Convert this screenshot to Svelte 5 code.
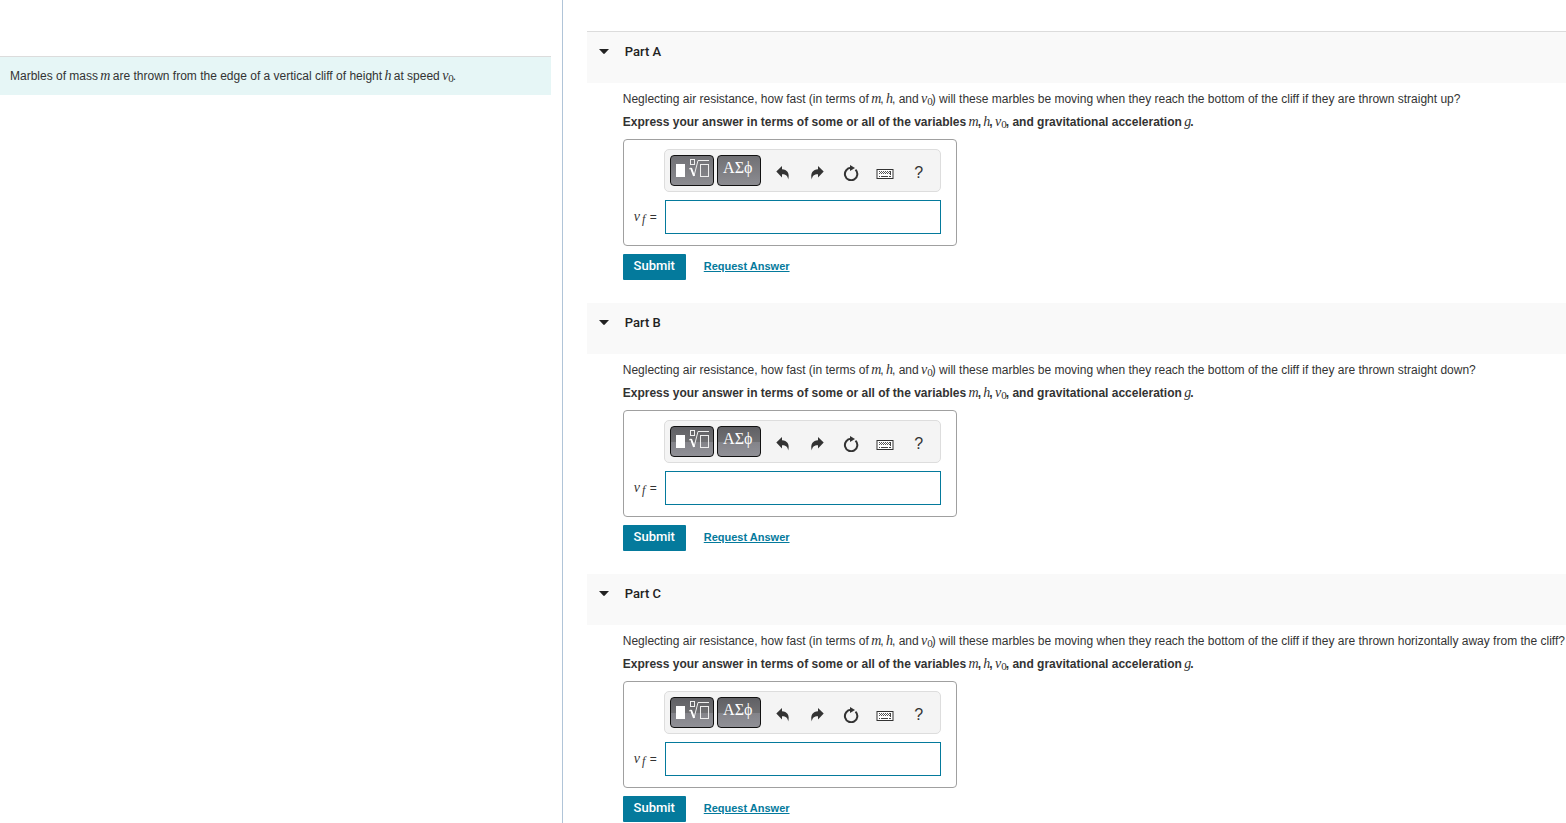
<script>
  let parts = $state([
    { id: 'A', ending: 'straight up', answer: '', open: true },
    { id: 'B', ending: 'straight down', answer: '', open: true },
    { id: 'C', ending: 'horizontally away from the cliff', answer: '', open: true }
  ]);

  const toggle = (part) => {
    part.open = !part.open;
  };

  const reset = (part) => {
    part.answer = '';
  };
</script>

{#snippet speed()}<i class="math">v<sub>0</sub></i>{/snippet}

<main>
  <aside>
    <p class="intro">
      Marbles of mass <i class="math">m</i> are thrown from the edge of a vertical cliff of height <i class="math">h</i> at speed {@render speed()}.
    </p>
  </aside>

  <div class="parts">
    {#each parts as part (part.id)}
      <section>
        <header>
          <button class="toggle" aria-expanded={part.open} onclick={() => toggle(part)}>
            <svg class="caret" class:closed={!part.open} viewBox="0 0 10 6" width="10" height="6"><path d="M0 0h10L5.8 4.6Q5 5.4 4.2 4.6z" /></svg>
            Part {part.id}
          </button>
        </header>
        {#if part.open}
          <div class="content">
            <p>Neglecting air resistance, how fast (in terms of <i class="math">m</i>, <i class="math">h</i>, and {@render speed()}) will these marbles be moving when they reach the bottom of the cliff if they are thrown {part.ending}?</p>
            <p class="instructions">Express your answer in terms of some or all of the variables <i class="math">m</i>, <i class="math">h</i>, {@render speed()}, and gravitational acceleration <i class="math">g</i>.</p>

            <div class="answer">
              <div class="toolbar">
                <button class="palette" class:flat={part.id === 'A'} aria-label="Templates">
                  <svg viewBox="0 0 34 22" width="34" height="22">
                    <rect x="1" y="6" width="9" height="13" fill="#fff" />
                    <g fill="none" stroke="#eee">
                      <rect x="15.5" y="1.5" width="4" height="5" />
                      <path d="M14 11l2-1 3 8 4-15.500H34" />
                      <rect x="25.500" y="6.500" width="8" height="12" />
                    </g>
                    <path d="M16 10l3 8" stroke="#fff" stroke-width="2" />
                  </svg>
                </button>
                <button class="palette greek" class:flat={part.id === 'A'} aria-label="Symbols">ΑΣϕ</button>
                <div class="icons">
                  <button aria-label="undo">
                    <svg viewBox="0 0 14 14" width="14" height="14"><path d="M6 0v3.200c5 .2 8 3.800 6.200 10.300C11.800 9.800 10 8.300 6 8.200v3.200L.3 5.600z" /></svg>
                  </button>
                  <button aria-label="redo">
                    <svg viewBox="0 0 14 14" width="14" height="14"><path d="M8 0v3.200C3 3.400 0 7 1.800 13.500 2.200 9.800 4 8.300 8 8.200v3.200l5.700-5.800z" /></svg>
                  </button>
                  <button aria-label="reset" onclick={() => reset(part)}>
                    <svg viewBox="0 0 16 16" width="16" height="16">
                      <path d="M12.500 4.600A6.200 6.200 0 1 1 8 2.800" fill="none" stroke="#333" stroke-width="2" />
                      <path d="M7 0l5 3-5 3z" />
                    </svg>
                  </button>
                  <button aria-label="keyboard shortcuts">
                    <svg viewBox="0 0 18 14" width="18" height="14">
                      <rect x="1" y="3.500" width="16" height="9" fill="#fff" stroke="#333" />
                      <path d="M3 5.500h12M4 6.500h11M3 7.500h12" stroke="#555" stroke-dasharray="1 1" />
                      <path d="M3 10.500h1M5 10.500h7M13 10.500h2M14.500 5v4" stroke="#444" />
                    </svg>
                  </button>
                  <button class="help" aria-label="help">?</button>
                </div>
              </div>
              <label for="answer-{part.id}"><i class="math">v<sub class="f">f</sub></i>=</label>
              <input id="answer-{part.id}" type="text" autocomplete="off" bind:value={part.answer} />
            </div>

            <div class="actions">
              <button class="submit">Submit</button>
              <a href="#request-{part.id}">Request Answer</a>
            </div>
          </div>
        {/if}
      </section>
    {/each}
  </div>
</main>

<style>
  :global(body) {
    margin: 0;
    background: #fff;
  }

  main {
    display: grid;
    grid-template-columns: 36% 1fr;
    height: 100vh;
    overflow: hidden;
    color: #333;
    font: 12px/16px "Liberation Sans", Arial, sans-serif;
  }

  aside {
    box-sizing: border-box;
    margin-right: 1px;
    padding: 56px 11px 0 0;
    border-right: 1px solid #b0c4d8;
  }

  p {
    margin: 0;
  }

  .intro {
    padding: 11px 10px;
    border-top: 1px solid #dcdcdc;
    background: #e6f6f6;
  }

  .math {
    margin: 0 -1px;
    font: italic 14px/12px "Liberation Serif", "Times New Roman", serif;
  }

  .math sub {
    font-style: normal;
    font-size: 11px;
    line-height: 0;
    vertical-align: -2px;
  }

  .math .f {
    margin-left: 2px;
    font-style: italic;
    font-size: 12px;
  }

  .parts {
    padding: 31px 0 0 23px;
    overflow: auto;
    scrollbar-width: none;
  }

  section:first-child {
    border-top: 1px solid #dcdcdc;
  }

  header {
    height: 51px;
    background: #f9f9f9;
  }

  .toggle {
    display: flex;
    align-items: center;
    gap: 16px;
    width: 100%;
    padding: 12px;
    border: 0;
    background: none;
    color: #222;
    font: 500 13px/16px Roboto, sans-serif;
    cursor: pointer;
  }

  .caret {
    fill: #222;
  }

  .closed {
    transform: rotate(-90deg);
  }

  .content {
    padding: 8px 0 23px 36px;
  }

  .instructions {
    margin-top: 7px;
    font-weight: bold;
  }

  .answer {
    display: grid;
    grid-template-columns: 29px 277px;
    justify-content: start;
    align-items: center;
    gap: 8px 1px;
    box-sizing: border-box;
    width: 334px;
    margin-top: 9px;
    padding: 9px 10px 11px;
    border: 1px solid #a0a0a0;
    border-radius: 4px;
  }

  .toolbar {
    display: flex;
    grid-column: 2;
    align-items: center;
    box-sizing: border-box;
    height: 43px;
    padding-left: 5px;
    border: 1px solid #ddd;
    border-radius: 5px;
    background: #f4f4f4;
  }

  .toolbar button {
    padding: 0;
    cursor: pointer;
  }

  .toolbar .palette {
    flex: none;
    box-sizing: border-box;
    width: 44px;
    height: 31px;
    margin-right: 3px;
    padding-bottom: 3px;
    border: 1px solid #111;
    border-radius: 4px;
    background: linear-gradient(#606064, #6f6f72 50%, #838389 51%, #909096);
    color: #fff;
  }

  .toolbar .flat {
    background: linear-gradient(#707074, #8c8c91);
  }

  .palette svg {
    display: block;
    margin: 0 auto;
  }

  .toolbar .greek {
    padding: 0 2px 5px 0;
    font: 16px/20px "Liberation Serif", serif;
  }

  .icons {
    display: flex;
    margin: 5px 0 0 2px;
  }

  .icons button {
    display: flex;
    align-items: center;
    justify-content: center;
    width: 34px;
    height: 34px;
    border: 0;
    background: none;
    color: #333;
    fill: #333;
  }

  .icons .help {
    font: 16px/20px "Liberation Sans", Arial, sans-serif;
  }

  label {
    display: flex;
    align-items: baseline;
    justify-content: space-between;
    padding: 0 6px 0 1px;
  }

  input {
    box-sizing: border-box;
    width: 276px;
    height: 34px;
    margin-left: 1px;
    padding: 0 8px;
    border: 1px solid #047a9c;
    background: #fff;
    font-size: 14px;
  }

  .actions {
    display: flex;
    align-items: center;
    gap: 18px;
    margin-top: 8px;
  }

  .submit {
    width: 63px;
    height: 26px;
    padding: 0 0 2px;
    border: 0;
    border-radius: 1px;
    background: #047a9c;
    color: #fff;
    font: 500 13px/16px Roboto, sans-serif;
    cursor: pointer;
  }

  a {
    padding-bottom: 2px;
    color: #047a9c;
    font-size: 11px;
    font-weight: bold;
  }
</style>
